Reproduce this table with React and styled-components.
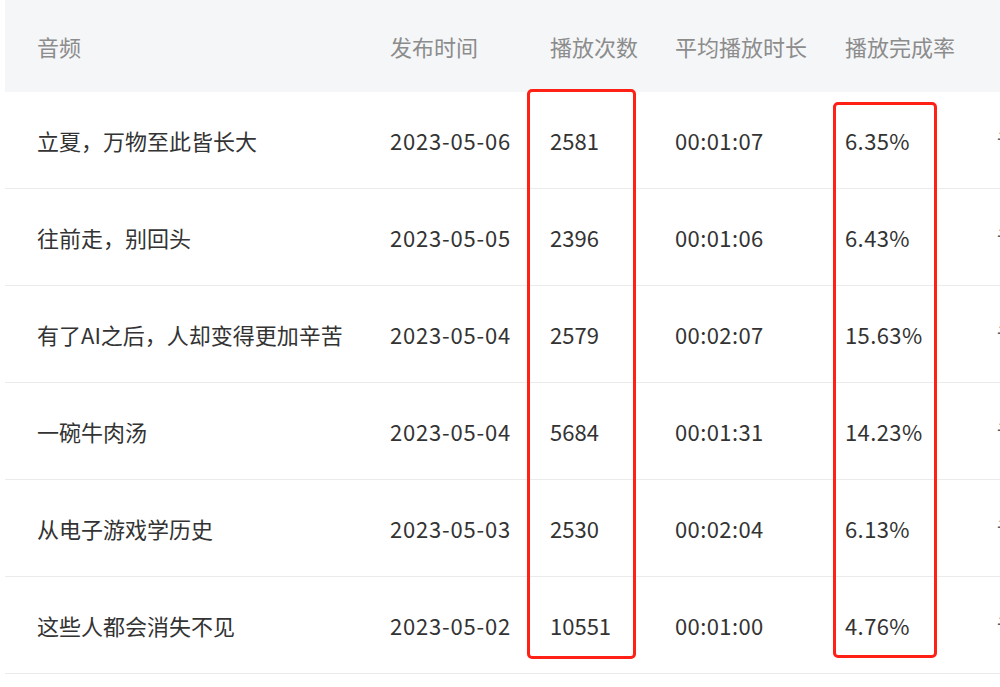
import React from "react";
import styled, { createGlobalStyle } from "styled-components";

const Global = createGlobalStyle`
  html, body { margin: 0; padding: 0; background: #fff; }
  body { width: 1000px; height: 687px; overflow: hidden; font-family: "Noto Sans CJK SC", "Noto Sans", sans-serif; }
`;

const Page = styled.div`
  position: relative;
  width: 1000px;
  height: 687px;
  overflow: hidden;
  padding-left: 5px;
  box-sizing: border-box;
`;

const cols = "353px 160px 125px 170px 152px 200px";

const Table = styled.div`
  width: 1160px;
  display: flex;
  flex-direction: column;
`;

const HeaderRow = styled.div`
  display: grid;
  grid-template-columns: ${cols};
  height: 92px;
  align-items: center;
  background: #f5f6f8;
`;

const Row = styled.div`
  display: grid;
  grid-template-columns: ${cols};
  height: 96px;
  align-items: center;
  border-bottom: 1px solid #ebebeb;
`;

const Cell = styled.div`
  padding-left: 32px;
  font-size: 22px;
  line-height: 30px;
  white-space: nowrap;
  letter-spacing: ${(p) => p.$ls || 0}px;
  color: ${(p) => (p.$head ? "#8c8c8c" : "#333333")};
`;

const Action = styled(Cell)`
  color: #555a66;
`;

const Mark = styled.div`
  position: absolute;
  border: 3px solid #ff2116;
  border-radius: 5px;
  box-sizing: border-box;
`;

const spacing = [0, 0.8, 0, 0.4, 0.4];

const data = [
  ["立夏，万物至此皆长大", "2023-05-06", "2581", "00:01:07", "6.35%"],
  ["往前走，别回头", "2023-05-05", "2396", "00:01:06", "6.43%"],
  ["有了AI之后，人却变得更加辛苦", "2023-05-04", "2579", "00:02:07", "15.63%"],
  ["一碗牛肉汤", "2023-05-04", "5684", "00:01:31", "14.23%"],
  ["从电子游戏学历史", "2023-05-03", "2530", "00:02:04", "6.13%"],
  ["这些人都会消失不见", "2023-05-02", "10551", "00:01:00", "4.76%"],
];

export default function App() {
  return (
    <Page>
      <Global />
      <Table>
        <HeaderRow>
          <Cell $head>音频</Cell>
          <Cell $head>发布时间</Cell>
          <Cell $head>播放次数</Cell>
          <Cell $head>平均播放时长</Cell>
          <Cell $head>播放完成率</Cell>
          <Cell $head />
        </HeaderRow>
        {data.map((r, i) => (
          <Row key={i}>
            {r.map((c, j) => (
              <Cell key={j} $ls={spacing[j]}>{c}</Cell>
            ))}
            <Action>详情</Action>
          </Row>
        ))}
      </Table>
      <Mark style={{ left: 527, top: 89, width: 109, height: 570 }} />
      <Mark style={{ left: 833, top: 102, width: 104, height: 556 }} />
    </Page>
  );
}
